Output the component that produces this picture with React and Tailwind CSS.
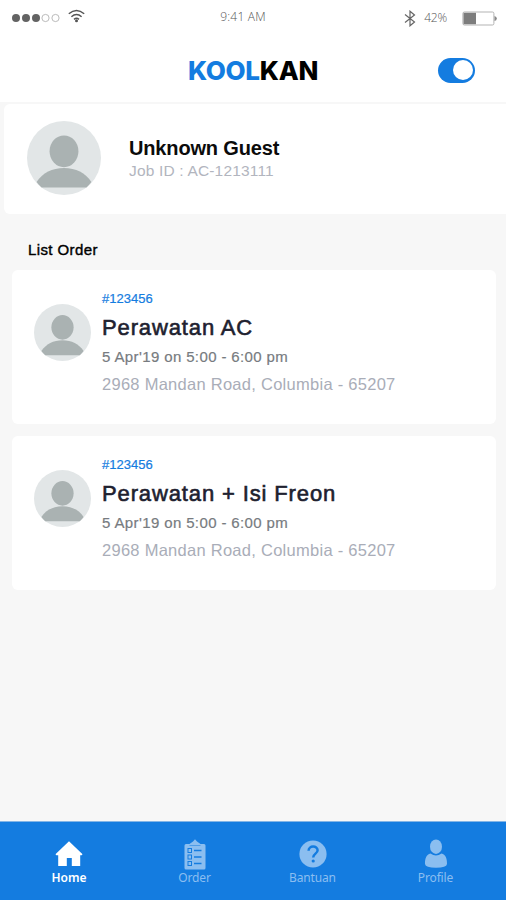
const orders = [
  {
    id: "#123456",
    title: "Perawatan AC",
    time: "5 Apr'19 on 5:00 - 6:00 pm",
    address: "2968 Mandan Road, Columbia - 65207",
  },
  {
    id: "#123456",
    title: "Perawatan + Isi Freon",
    time: "5 Apr'19 on 5:00 - 6:00 pm",
    address: "2968 Mandan Road, Columbia - 65207",
  },
];

function Avatar({ className }) {
  return (
    <svg viewBox="0 0 100 100" className={`shrink-0 ${className}`}>
      <circle cx="50" cy="50" r="50" fill="#e2e6e7" />
      <ellipse cx="50" cy="41" rx="19.5" ry="21.5" fill="#aab2b2" />
      <path d="M13 82.5C21 70 34 63.5 50 63.5S79 70 87 82.5Q84 86.500 80.400 89.700H19.600Q16 86.500 13 82.500Z" fill="#aab2b2" />
    </svg>
  );
}

function HomeIcon() {
  return (
    <svg width="28" height="26" viewBox="0 0 28 26" fill="currentColor">
      <path d="M14 0.300L27.300 13Q27.600 14.200 26.300 14.200H25.200V25H16.800V17H11.800V25H3.200V14.200H1.700Q0.400 14.200 0.700 13Z" />
    </svg>
  );
}

function OrderIcon() {
  return (
    <svg width="22" height="31" viewBox="0 0 22 31">
      <path
        d="M2 5H5.500L9 2.500L11 .300L13 2.500L16.500 5H20Q21.500 5 21.500 6.500V29Q21.500 30.500 20 30.500H2Q.500 30.500 .500 29V6.500Q.500 5 2 5Z"
        fill="currentColor"
      />
      <g fill="none" stroke="#147ce0" strokeWidth="1">
        <path d="M5.500 6.500H16.500" opacity=".5" />
        <rect x="4" y="9.500" width="3.500" height="4" />
        <rect x="4" y="16" width="3.500" height="4" />
        <rect x="4" y="22.500" width="3.500" height="4" />
        <path d="M10 11.500H17.500M10 18H17.500M10 24.500H17.500" strokeWidth="1.400" />
      </g>
    </svg>
  );
}

function HelpIcon() {
  return (
    <svg width="28" height="28" viewBox="0 0 28 28">
      <circle cx="14" cy="14" r="13.600" fill="currentColor" />
      <path d="M9.600 10.700C9.600 5.200 18.600 5.300 18.600 10.300C18.600 13.800 14.200 13.500 14.200 17.500" fill="none" stroke="#147ce0" strokeWidth="2.500" />
      <circle cx="14.200" cy="21" r="1.600" fill="#147ce0" />
    </svg>
  );
}

function ProfileIcon() {
  return (
    <svg width="24" height="30" viewBox="0 0 24 30" fill="currentColor">
      <ellipse cx="12" cy="7.700" rx="6" ry="7.200" />
      <path d="M6.500 14.500Q12 18.500 17.500 14.500C21.500 15.500 23.200 19.500 23 25Q22.500 28.800 12 28.800T1 25C.800 19.500 2.500 15.500 6.500 14.500Z" />
    </svg>
  );
}

const tabs = [
  { label: "Home", icon: HomeIcon, active: true },
  { label: "Order", icon: OrderIcon },
  { label: "Bantuan", icon: HelpIcon },
  { label: "Profile", icon: ProfileIcon },
];

function StatusBar() {
  return (
    <div className="grid h-9 grid-cols-[1fr_auto_1fr] items-center pl-[11px] pr-[9px] font-['Open_Sans',sans-serif] text-[12px] font-light text-[#555]">
      <div className="flex items-center gap-2">
        <svg width="50" height="10" viewBox="0 0 50 10">
          <circle cx="5" cy="5" r="4" fill="#636363" />
          <circle cx="15" cy="5" r="4" fill="#636363" />
          <circle cx="25" cy="5" r="4" fill="#636363" />
          <circle cx="34.500" cy="5" r="3.600" fill="none" stroke="#aaa" strokeWidth=".8" />
          <circle cx="44.500" cy="5" r="3.600" fill="none" stroke="#aaa" strokeWidth=".8" />
        </svg>
        <svg width="17" height="14" viewBox="0 0 17 14" fill="none" stroke="#555" strokeWidth="1.500" className="-mt-1 -ml-px">
          <path d="M.8 4.800Q8.500 -1.800 16.200 4.800M3.400 7.700Q8.500 3.300 13.600 7.700M6 10.300Q8.500 8.300 11 10.300" />
          <circle cx="8.500" cy="11.800" r="1.500" fill="#555" stroke="none" />
        </svg>
      </div>
      <span className="-mt-0.5 -ml-[22px] tracking-[0.2px]">9:41 AM</span>
      <div className="flex items-center justify-end">
        <svg width="12" height="17" viewBox="0 0 12 17" fill="none" stroke="#666" strokeWidth="1.200">
          <path d="M1 4.500L10.500 12L6 15.800V1.200L10.500 5L1 12.500" />
        </svg>
        <span className="ml-[8px] tracking-[-0.2px]">42%</span>
        <svg width="35" height="15" viewBox="0 0 35 15" className="ml-[15px]">
          <rect x=".9" y="1" width="31" height="13" rx="1.500" fill="#fff" stroke="#aaa" strokeWidth=".9" />
          <rect x="1.500" y="1.800" width="12.500" height="11.400" fill="#7d7d7d" />
          <path d="M32.500 5Q34.800 5.500 34.800 7.500T32.500 10Z" fill="#888" />
        </svg>
      </div>
    </div>
  );
}

function OrderCard({ order }) {
  return (
    <div className="flex h-[154px] rounded-md bg-white pl-[22px]">
      <Avatar className="mt-[34px] h-[57px] w-[57px]" />
      <div className="ml-[11px] flex flex-col whitespace-nowrap pt-[21px]">
        <span className="text-[13px] leading-[16px] text-[#147ce0] [-webkit-text-stroke:0.2px]">{order.id}</span>
        <span className="mt-2 text-[22px] leading-[26px] tracking-[0.87px] text-[#20212f] [-webkit-text-stroke:0.6px]">{order.title}</span>
        <span className="mt-[7px] text-[15px] leading-[18px] tracking-[0.38px] text-[#777b80] [-webkit-text-stroke:0.2px]">{order.time}</span>
        <span className="mt-2 text-[16.5px] leading-[20px] tracking-[0.27px] text-[#a9adb8]">{order.address}</span>
      </div>
    </div>
  );
}

function TabBar() {
  return (
    <nav className="grid h-[78px] grid-cols-[138px_113px_123px_123px] bg-[#147ce0] shadow-[0_-1px_0_#84b5e6]">
      {tabs.map((tab) => {
        const Icon = tab.icon;
        return (
          <div key={tab.label} className={`flex flex-col items-center pt-4 ${tab.active ? "text-white" : "text-[#8bbef0]"}`}>
            <div className="flex h-8 items-center">
              <Icon />
            </div>
            <span
              className={`font-['Noto_Sans',sans-serif] text-[12px] leading-4 ${tab.active ? "font-semibold" : "tracking-[-0.15px]"}`}
            >
              {tab.label}
            </span>
          </div>
        );
      })}
    </nav>
  );
}

export default function App() {
  return (
    <div className="flex h-[900px] w-[506px] flex-col overflow-hidden bg-[#f7f7f7] font-['Liberation_Sans',Arial,sans-serif]">
      <header className="h-[102px] bg-white">
        <StatusBar />
        <div className="grid h-[68px] grid-cols-[1fr_auto_1fr] items-center pr-[31px] pl-[31px]">
          <span />
          <h1 className="font-['Inter',sans-serif] text-[26px] font-extrabold tracking-[-0.3px] text-black">
            <span className="text-[#147ce0]">KOOL</span>KAN
          </h1>
          <button className="flex h-[25px] w-[37px] items-center justify-end justify-self-end rounded-full bg-[#147ce0] pr-[2px]">
            <span className="h-[20px] w-[20px] rounded-full bg-white" />
          </button>
        </div>
      </header>

      <section className="mt-[2px] ml-1 flex h-[110px] rounded-l-md bg-white pl-[23px]">
        <Avatar className="mt-[17px] h-[74px] w-[74px]" />
        <div className="ml-7 flex flex-col pt-[32px]">
          <span className="text-[20px] leading-6 font-bold tracking-[-0.15px] text-[#0b0b0b]">Unknown Guest</span>
          <span className="text-[15.5px] leading-[22px] tracking-[0.17px] text-[#b2b5be]">Job ID : AC-1213111</span>
        </div>
      </section>

      <main className="flex-1 pr-[10px] pl-3">
        <h2 className="mt-[26px] mb-[10px] ml-4 text-[15px] leading-5 tracking-[0.4px] text-black [-webkit-text-stroke:0.4px]">List Order</h2>
        <div className="flex flex-col gap-3">
          {orders.map((order, i) => (
            <OrderCard key={i} order={order} />
          ))}
        </div>
      </main>

      <TabBar />
    </div>
  );
}
